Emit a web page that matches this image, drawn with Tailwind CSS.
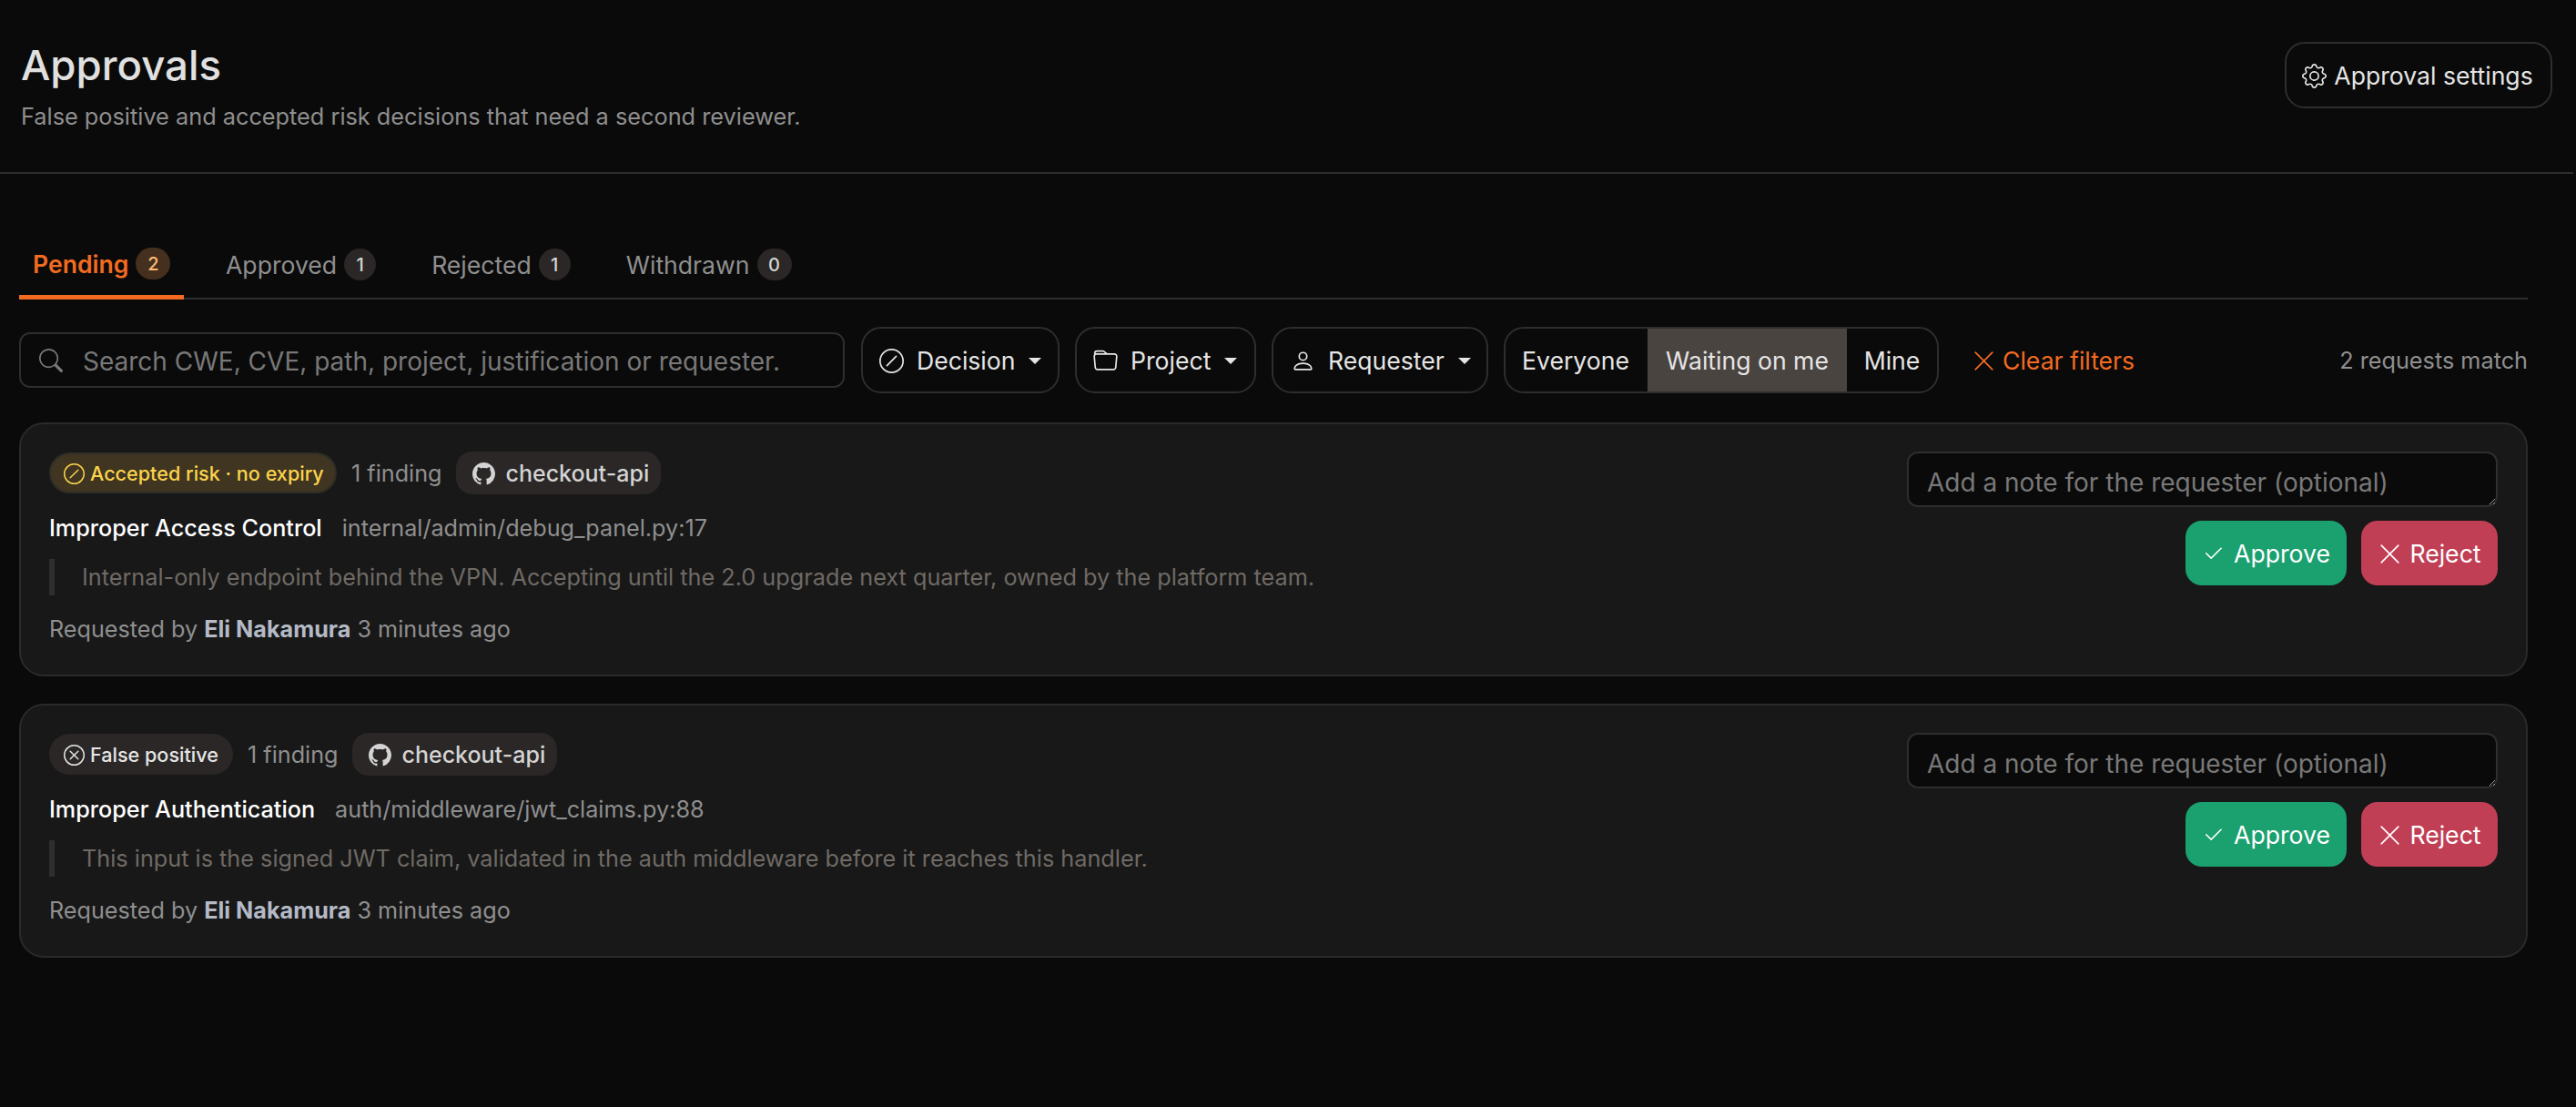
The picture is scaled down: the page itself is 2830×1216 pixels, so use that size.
<!doctype html>
<html lang="en">
<head>
<meta charset="utf-8">
<title>Approvals</title>
<script src="https://cdn.jsdelivr.net/npm/@tailwindcss/browser@4"></script>
</head>
<body class="m-0 h-[1216px] w-[2830px] overflow-hidden bg-[#0a0a0a] font-['Inter',sans-serif] text-[#e5e5e5]">
<svg class="hidden">
  <symbol id="slash" viewBox="0 0 16 16"><path fill="currentColor" d="M8 15A7 7 0 1 1 8 1a7 7 0 0 1 0 14m0 1A8 8 0 1 0 8 0a8 8 0 0 0 0 16"/><path fill="currentColor" d="M11.354 4.646a.5.5 0 0 0-.708 0l-6 6a.5.5 0 0 0 .708.708l6-6a.5.5 0 0 0 0-.708"/></symbol>
  <symbol id="xcircle" viewBox="0 0 16 16"><path fill="currentColor" d="M8 15A7 7 0 1 1 8 1a7 7 0 0 1 0 14m0 1A8 8 0 1 0 8 0a8 8 0 0 0 0 16"/><path fill="currentColor" d="M4.646 4.646a.5.5 0 0 1 .708 0L8 7.293l2.646-2.647a.5.5 0 0 1 .708.708L8.707 8l2.647 2.646a.5.5 0 0 1-.708.708L8 8.707l-2.646 2.647a.5.5 0 0 1-.708-.708L7.293 8 4.646 5.354a.5.5 0 0 1 0-.708"/></symbol>
  <symbol id="x" viewBox="0 0 16 16"><path fill="currentColor" d="M2.146 2.854a.5.5 0 1 1 .708-.708L8 7.293l5.146-5.147a.5.5 0 0 1 .708.708L8.707 8l5.147 5.146a.5.5 0 0 1-.708.708L8 8.707l-5.146 5.147a.5.5 0 0 1-.708-.708L7.293 8z"/></symbol>
  <symbol id="check" viewBox="0 0 16 16"><path fill="currentColor" d="M13.854 3.646a.5.5 0 0 1 0 .708l-7 7a.5.5 0 0 1-.708 0l-3.5-3.5a.5.5 0 1 1 .708-.708L6.5 10.293l6.646-6.647a.5.5 0 0 1 .708 0"/></symbol>
  <symbol id="github" viewBox="0 0 16 16"><path fill="currentColor" d="M8 0C3.58 0 0 3.58 0 8c0 3.54 2.29 6.53 5.47 7.59.4.07.55-.17.55-.38 0-.19-.01-.82-.01-1.49-2.01.37-2.53-.49-2.69-.94-.09-.23-.48-.94-.82-1.13-.28-.15-.68-.52-.01-.53.63-.01 1.08.58 1.23.82.72 1.21 1.87.87 2.33.66.07-.52.28-.87.51-1.07-1.78-.2-3.64-.89-3.64-3.95 0-.87.31-1.59.82-2.15-.08-.2-.36-1.02.08-2.12 0 0 .67-.21 2.2.82.64-.18 1.32-.27 2-.27s1.36.09 2 .27c1.53-1.04 2.2-.82 2.2-.82.44 1.1.16 1.92.08 2.12.51.56.82 1.27.82 2.15 0 3.07-1.87 3.75-3.65 3.95.29.25.54.73.54 1.48 0 1.07-.01 1.93-.01 2.2 0 .21.15.46.55.38A8.01 8.01 0 0 0 16 8c0-4.42-3.58-8-8-8"/></symbol>
</svg>

<header class="mr-[3px] flex h-[191px] items-start justify-between border-b-2 border-[#2e2e2e] pr-[23px] pl-[23px]">
  <div class="pt-[42px]">
    <h1 class="text-[45.6px] leading-[60px] font-medium text-[#e0e0e0]">Approvals</h1>
    <p class="mt-[8px] text-[25.3px] leading-[36px] text-[#8f8f8f]">False positive and accepted risk decisions that need a second reviewer.</p>
  </div>
  <button class="mt-[46px] flex h-[73px] w-[294px] items-center justify-center gap-[8px] rounded-[22px] border-2 border-[#2e2e2e] pt-[2px] pr-[2px] text-[26.6px] text-[#e5e5e5]">
    <svg class="size-[27px]" viewBox="0 0 16 16" fill="currentColor"><path d="M8 4.754a3.246 3.246 0 1 0 0 6.492 3.246 3.246 0 0 0 0-6.492M5.754 8a2.246 2.246 0 1 1 4.492 0 2.246 2.246 0 0 1-4.492 0"/><path d="M9.796 1.343c-.527-1.79-3.065-1.79-3.592 0l-.094.319a.873.873 0 0 1-1.255.52l-.292-.16c-1.64-.892-3.433.902-2.54 2.541l.159.292a.873.873 0 0 1-.52 1.255l-.319.094c-1.79.527-1.79 3.065 0 3.592l.319.094a.873.873 0 0 1 .52 1.255l-.16.292c-.892 1.64.901 3.434 2.541 2.54l.292-.159a.873.873 0 0 1 1.255.52l.094.319c.527 1.79 3.065 1.79 3.592 0l.094-.319a.873.873 0 0 1 1.255-.52l.292.16c1.64.893 3.434-.902 2.54-2.541l-.159-.292a.873.873 0 0 1 .52-1.255l.319-.094c1.79-.527 1.79-3.065 0-3.592l-.319-.094a.873.873 0 0 1-.52-1.255l.16-.292c.893-1.64-.902-3.433-2.541-2.54l-.292.159a.873.873 0 0 1-1.255-.52zm-2.633.283c.246-.835 1.428-.835 1.674 0l.094.319a1.873 1.873 0 0 0 2.693 1.115l.291-.16c.764-.415 1.6.42 1.184 1.185l-.159.292a1.873 1.873 0 0 0 1.116 2.692l.318.094c.835.246.835 1.428 0 1.674l-.319.094a1.873 1.873 0 0 0-1.115 2.693l.16.291c.415.764-.42 1.6-1.185 1.184l-.291-.159a1.873 1.873 0 0 0-2.693 1.116l-.094.318c-.246.835-1.428.835-1.674 0l-.094-.319a1.873 1.873 0 0 0-2.692-1.115l-.292.16c-.764.415-1.6-.42-1.184-1.185l.159-.291A1.873 1.873 0 0 0 1.945 8.93l-.319-.094c-.835-.246-.835-1.428 0-1.674l.319-.094A1.873 1.873 0 0 0 3.06 4.377l-.16-.292c-.415-.764.42-1.6 1.185-1.184l.292.159a1.873 1.873 0 0 0 2.692-1.115z"/></svg>
    Approval settings
  </button>
</header>

<main class="w-[2777px] pt-[63px] pl-[21px]">
  <nav class="flex h-[75px] border-b-2 border-[#2e2e2e] text-[26.6px]">
    <a class="flex h-[75px] w-[181px] items-center gap-[8px] border-b-[5px] border-[#f26b21] pt-[3px] pl-[15px] font-semibold text-[#f26b21]">Pending <span class="-mt-[2px] flex h-[35px] w-[38px] items-center justify-center rounded-full bg-[#45301f] text-[20px] font-medium text-[#fdba74]">2</span></a>
    <a class="ml-[31px] flex h-[73px] items-center gap-[8px] px-[15px] pt-[3px] text-[#8f8f8f]">Approved <span class="-mt-[3px] flex h-[35px] w-[35px] items-center justify-center rounded-full bg-[#2a2726] text-[20px] font-medium text-[#d4d4d4]">1</span></a>
    <a class="ml-[31px] flex h-[73px] items-center gap-[8px] px-[15px] pt-[3px] text-[#8f8f8f]">Rejected <span class="-mt-[3px] flex h-[35px] w-[35px] items-center justify-center rounded-full bg-[#2a2726] text-[20px] font-medium text-[#d4d4d4]">1</span></a>
    <a class="ml-[31px] flex h-[73px] items-center gap-[8px] px-[15px] pt-[3px] text-[#8f8f8f]">Withdrawn <span class="-mt-[3px] flex h-[35px] w-[38px] items-center justify-center rounded-full bg-[#2a2726] text-[20px] font-medium text-[#d4d4d4]">0</span></a>
  </nav>

  <div class="mt-[30px] flex h-[73px] items-center text-[26.6px]">
    <label class="flex h-[61px] w-[907px] items-center gap-[22px] rounded-[12px] border-2 border-[#2e2e2e] pl-[20px] text-[#787878]">
      <svg class="size-[26px]" viewBox="0 0 16 16" fill="currentColor"><path d="M11.742 10.344a6.5 6.5 0 1 0-1.397 1.398h-.001q.044.06.098.115l3.85 3.85a1 1 0 0 0 1.415-1.414l-3.85-3.85a1 1 0 0 0-.115-.1zM12 6.5a5.5 5.5 0 1 1-11 0 5.5 5.5 0 0 1 11 0"/></svg>
      <input class="mt-[2px] min-w-0 flex-1 bg-transparent text-[28px] outline-none placeholder:text-[#787878]" placeholder="Search CWE, CVE, path, project, justification or requester.">
    </label>
    <button class="ml-[18px] flex h-[73px] w-[218px] items-center gap-[14px] rounded-[22px] border-2 border-[#2e2e2e] pt-[2px] pl-[18px] text-[#e5e5e5]">
      <svg class="size-[27px]"><use href="#slash"/></svg>Decision<i class="ml-[1px] border-x-[7.5px] border-t-[7.5px] border-x-transparent border-t-[#e5e5e5]"></i>
    </button>
    <button class="ml-[17px] flex h-[73px] w-[199px] items-center gap-[14px] rounded-[22px] border-2 border-[#2e2e2e] pt-[2px] pl-[18px] text-[#e5e5e5]">
      <svg class="size-[27px]" viewBox="0 0 16 16" fill="currentColor"><path d="M.54 3.87.5 3a2 2 0 0 1 2-2h3.672a2 2 0 0 1 1.414.586l.828.828A2 2 0 0 0 9.828 3h3.982a2 2 0 0 1 1.992 2.181l-.637 7A2 2 0 0 1 13.174 14H2.826a2 2 0 0 1-1.991-1.819l-.637-7a2 2 0 0 1 .342-1.31zM2.19 4a1 1 0 0 0-.996 1.09l.637 7a1 1 0 0 0 .995.91h10.348a1 1 0 0 0 .995-.91l.637-7A1 1 0 0 0 13.81 4zm4.69-1.707A1 1 0 0 0 6.172 2H2.5a1 1 0 0 0-1 .981l.006.139q.323-.119.684-.12h5.396z"/></svg>Project<i class="ml-[1px] border-x-[7.5px] border-t-[7.5px] border-x-transparent border-t-[#e5e5e5]"></i>
    </button>
    <button class="ml-[17px] flex h-[73px] w-[238px] items-center gap-[14px] rounded-[22px] border-2 border-[#2e2e2e] pt-[2px] pl-[19px] text-[#e5e5e5]">
      <svg class="size-[27px]" viewBox="0 0 16 16" fill="currentColor"><path d="M8 8a3 3 0 1 0 0-6 3 3 0 0 0 0 6m2-3a2 2 0 1 1-4 0 2 2 0 0 1 4 0m4 8c0 1-1 1-1 1H3s-1 0-1-1 1-4 6-4 6 3 6 4m-1-.004c-.001-.246-.154-.986-.832-1.664C11.516 10.68 10.289 10 8 10s-3.516.68-4.168 1.332c-.678.678-.83 1.418-.832 1.664z"/></svg>Requester<i class="ml-[1px] border-x-[7.5px] border-t-[7.5px] border-x-transparent border-t-[#e5e5e5]"></i>
    </button>
    <div class="ml-[17px] flex h-[73px] w-[478px] overflow-hidden rounded-[22px] border-2 border-[#2e2e2e]">
      <span class="flex w-[156px] items-center justify-center pt-[2px] pr-[2px]">Everyone</span>
      <span class="flex w-[219px] items-center justify-center bg-[#4a4440] pt-[2px]">Waiting on me</span>
      <span class="flex flex-1 items-center justify-center pt-[2px]">Mine</span>
    </div>
    <button class="ml-[36px] flex items-center gap-[7px] pt-[2px] text-[#f26b21]"><svg class="size-[27px]"><use href="#x"/></svg>Clear filters</button>
    <span class="ml-auto pt-[2px] text-[25.25px] text-[#8f8f8f]">2 requests match</span>
  </div>

  <section class="mt-[32px] flex flex-col gap-[30px]">
    <article class="flex h-[279px] items-start justify-between rounded-[27px] border-2 border-[#2a2a2a] bg-[#181818] pt-[30px] pr-[31px] pl-[31px]">
      <div>
        <div class="flex h-[47px] items-center">
          <span class="flex h-[45px] w-[316px] items-center gap-[6px] rounded-full border-2 border-[#2e2d28] bg-[#3f3520] pt-[2px] pl-[14px] text-[21.6px] font-medium text-[#fcd34d]"><svg class="size-[23px]"><use href="#slash"/></svg>Accepted risk · no expiry</span>
          <span class="ml-[16px] pt-[3px] text-[25.2px] text-[#8f8f8f]">1 finding</span>
          <span class="ml-[16px] flex h-[47px] w-[225px] items-center gap-[11px] rounded-[18px] bg-[#2a2726] pt-[2px] pl-[18px] text-[25px] font-medium text-[#d4d4d4]"><svg class="size-[25px]"><use href="#github"/></svg>checkout-api</span>
        </div>
        <div class="mt-[16px] flex h-[40px] items-center gap-[22px] pt-[3px] text-[25.2px]"><span class="font-medium text-white">Improper Access Control</span><span class="text-[#8f8f8f]">internal/admin/debug_panel.py:17</span></div>
        <blockquote class="mt-[15px] flex h-[40px] items-center border-l-[6px] border-[#2e2e2e] pt-[2px] pl-[30px] text-[25.25px] text-[#6f6a65]">Internal-only endpoint behind the VPN. Accepting until the 2.0 upgrade next quarter, owned by the platform team.</blockquote>
        <p class="mt-[17px] h-[39px] text-[25.2px] leading-[40px] text-[#8f8f8f]">Requested by <b class="font-bold text-[#b4bac6]">Eli Nakamura</b> 3 minutes ago</p>
      </div>
      <div class="flex w-[649px] flex-col items-end">
        <textarea rows="1" class="h-[61px] w-full rounded-[12px] border-2 border-[#2e2e2e] bg-[#0a0a0a] px-[20px] pt-[13px] pb-[6px] text-[28px] leading-[38px] outline-none placeholder:text-[#787878]" placeholder="Add a note for the requester (optional)"></textarea>
        <div class="mt-[15px] flex gap-[16px] text-[26.6px] text-white">
          <button class="flex h-[71px] w-[177px] items-center justify-center gap-[10px] rounded-[18px] bg-[#1ba070] pt-[2px]"><svg class="size-[25px]"><use href="#check"/></svg>Approve</button>
          <button class="flex h-[71px] w-[150px] items-center justify-center gap-[8px] rounded-[18px] bg-[#c13f55] pt-[2px]"><svg class="size-[27px]"><use href="#x"/></svg>Reject</button>
        </div>
      </div>
    </article>

    <article class="flex h-[279px] items-start justify-between rounded-[27px] border-2 border-[#2a2a2a] bg-[#181818] pt-[30px] pr-[31px] pl-[31px]">
      <div>
        <div class="flex h-[47px] items-center">
          <span class="flex h-[45px] w-[202px] items-center gap-[6px] rounded-full bg-[#2a2726] pt-[2px] pl-[16px] text-[21.6px] font-medium text-[#e5e5e5]"><svg class="size-[23px]"><use href="#xcircle"/></svg>False positive</span>
          <span class="ml-[16px] pt-[3px] text-[25.2px] text-[#8f8f8f]">1 finding</span>
          <span class="ml-[16px] flex h-[47px] w-[225px] items-center gap-[11px] rounded-[18px] bg-[#2a2726] pt-[2px] pl-[18px] text-[25px] font-medium text-[#d4d4d4]"><svg class="size-[25px]"><use href="#github"/></svg>checkout-api</span>
        </div>
        <div class="mt-[16px] flex h-[40px] items-center gap-[22px] pt-[3px] text-[25.2px]"><span class="font-medium text-white">Improper Authentication</span><span class="text-[#8f8f8f]">auth/middleware/jwt_claims.py:88</span></div>
        <blockquote class="mt-[15px] flex h-[40px] items-center border-l-[6px] border-[#2e2e2e] pt-[2px] pl-[30px] text-[25.25px] text-[#6f6a65]">This input is the signed JWT claim, validated in the auth middleware before it reaches this handler.</blockquote>
        <p class="mt-[17px] h-[39px] text-[25.2px] leading-[40px] text-[#8f8f8f]">Requested by <b class="font-bold text-[#b4bac6]">Eli Nakamura</b> 3 minutes ago</p>
      </div>
      <div class="flex w-[649px] flex-col items-end">
        <textarea rows="1" class="h-[61px] w-full rounded-[12px] border-2 border-[#2e2e2e] bg-[#0a0a0a] px-[20px] pt-[13px] pb-[6px] text-[28px] leading-[38px] outline-none placeholder:text-[#787878]" placeholder="Add a note for the requester (optional)"></textarea>
        <div class="mt-[15px] flex gap-[16px] text-[26.6px] text-white">
          <button class="flex h-[71px] w-[177px] items-center justify-center gap-[10px] rounded-[18px] bg-[#1ba070] pt-[2px]"><svg class="size-[25px]"><use href="#check"/></svg>Approve</button>
          <button class="flex h-[71px] w-[150px] items-center justify-center gap-[8px] rounded-[18px] bg-[#c13f55] pt-[2px]"><svg class="size-[27px]"><use href="#x"/></svg>Reject</button>
        </div>
      </div>
    </article>
  </section>
</main>
</body>
</html>
